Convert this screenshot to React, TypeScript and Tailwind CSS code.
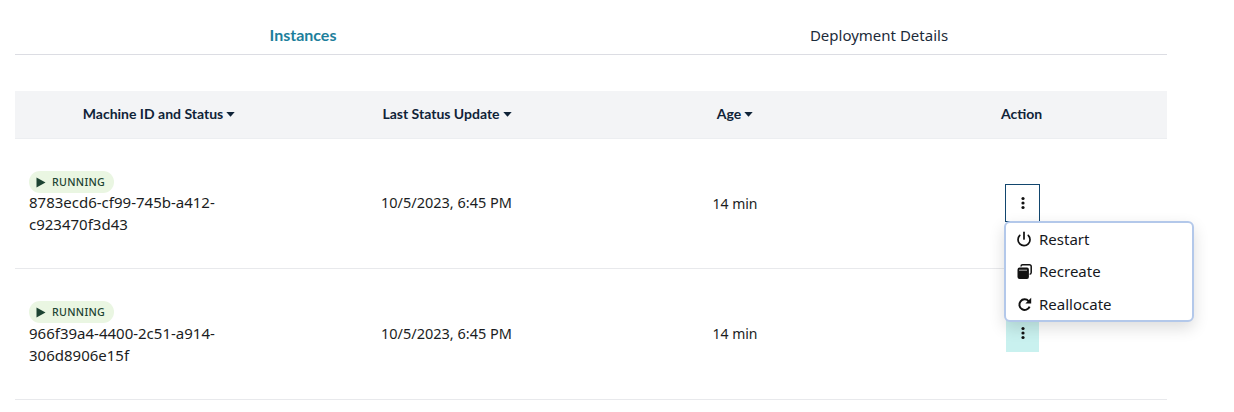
import { Power } from 'lucide-react'

const rows = [
  { id: '8783ecd6-cf99-745b-a412-c923470f3d43', updated: '10/5/2023, 6:45 PM', age: '14 min', open: true },
  { id: '966f39a4-4400-2c51-a914-306d8906e15f', updated: '10/5/2023, 6:45 PM', age: '14 min', open: false },
]

function Caret() {
  return (
    <svg width="9" height="5" viewBox="0 0 9 5" className="ml-[3px] inline-block">
      <path d="M0.3 0h8.4L4.5 4.8z" fill="#0f2338" />
    </svg>
  )
}

function Dots() {
  return (
    <svg width="4" height="14" viewBox="0 0 4 14" fill="#111">
      <circle cx="2" cy="2.5" r="1.6" />
      <circle cx="2" cy="7" r="1.6" />
      <circle cx="2" cy="11.5" r="1.6" />
    </svg>
  )
}

function RecreateIcon() {
  return (
    <svg width="15" height="15" viewBox="0 0 15 15">
      <path d="M4 2.6V2.4A1.6 1.6 0 0 1 5.6 0.8h6.9A1.7 1.7 0 0 1 14.2 2.5v6.1A1.6 1.6 0 0 1 12.6 10.2" fill="none" stroke="#111" strokeWidth="1.5" />
      <path d="M2.6 3.6h7.4a1.9 1.9 0 0 1 1.9 1.9v7.6a1.9 1.9 0 0 1-1.9 1.9H2.6a2.1 2.1 0 0 1-2.1-2.1V5.7a2.1 2.1 0 0 1 2.1-2.1z" fill="#111" />
      <path d="M2 6.2h8" stroke="#fff" strokeWidth="0.7" />
    </svg>
  )
}

function ReallocateIcon() {
  return (
    <svg width="15" height="15" viewBox="0 0 15 15">
      <path d="M11.6 4.1A5.3 5.3 0 1 0 12.6 9.6" fill="none" stroke="#111" strokeWidth="2" />
      <path d="M14.2 0.8V6.6H8.4z" fill="#111" />
    </svg>
  )
}

function Menu() {
  const items = [
    { label: 'Restart', icon: <Power size={16} strokeWidth={2.6} color="#111" /> },
    { label: 'Recreate', icon: <RecreateIcon /> },
    { label: 'Reallocate', icon: <ReallocateIcon /> },
  ]
  return (
    <div className="absolute left-[-1px] top-[37px] z-10 w-[190px] h-[101px] rounded-[6px] border-2 border-[#b3c8ea] bg-white shadow-[0_6px_16px_rgba(0,0,0,0.14)]">
      <div className="flex h-[32px] items-center pl-[10px] gap-[7px] text-[15px] text-[#16181d]">
        <span className="flex w-[16px] justify-center">{items[0].icon}</span>
        {items[0].label}
      </div>
      <div className="flex h-[33px] items-center pl-[10px] gap-[7px] text-[15px] text-[#16181d]">
        <span className="flex w-[16px] justify-center">{items[1].icon}</span>
        {items[1].label}
      </div>
      <div className="flex h-[32px] items-center pl-[10px] gap-[7px] text-[15px] text-[#16181d]">
        <span className="flex w-[16px] justify-center">{items[2].icon}</span>
        {items[2].label}
      </div>
    </div>
  )
}

export default function App() {
  return (
    <div className="w-[1234px] h-[412px] bg-white pl-[15px] overflow-hidden font-['Noto_Sans',sans-serif] text-[#1b1d22]">
      <div className="w-[1152px]">
        <div className="grid grid-cols-2 h-[55px] border-b border-[#dcdde3] pt-[25px] text-[15px] text-center leading-[20px]">
          <div className="font-['Lato',sans-serif] font-bold text-[16px] text-[#1d7f9c]">Instances</div>
          <div className="text-[#1c2b3a]">Deployment Details</div>
        </div>
        <div className="mt-[36px] grid grid-cols-4 h-[48px] pb-[3px] items-center bg-[#f3f4f6] border-b border-[#eceef1] text-center font-['Lato',sans-serif] text-[14px] font-bold text-[#0f2338]">
          <div>Machine ID and Status<Caret /></div>
          <div>Last Status Update<Caret /></div>
          <div>Age<Caret /></div>
          <div className="pr-[3px]">Action</div>
        </div>
        {rows.map((row) => (
          <div key={row.id} className={row.open
            ? 'grid grid-cols-4 h-[130px] pb-[1px] items-center border-b border-[#e8e9ec] text-[14.5px]'
            : 'grid grid-cols-4 h-[131px] pb-[2px] items-center border-b border-[#e8e9ec] text-[14.5px]'}>
            <div className={row.open ? 'pl-[14px] pr-[70px]' : 'pl-[14px] pr-[70px] pt-[1px]'}>
              <div className={row.open
                ? 'flex w-fit h-[22px] -mb-[2px] items-center rounded-full bg-[#eaf6e2] pl-[7px] pr-[9px] gap-[6px] text-[10.7px] font-medium tracking-[0.3px] text-[#1d4432]'
                : 'flex w-fit h-[22px] -mb-[1px] items-center rounded-full bg-[#eaf6e2] pl-[7px] pr-[9px] gap-[6px] text-[10.7px] font-medium tracking-[0.3px] text-[#1d4432]'}>
                <svg width="10" height="11" viewBox="0 0 10 11"><path d="M0.5 0.5 9.5 5.5 0.5 10.5z" fill="#1d4432" /></svg>
                RUNNING
              </div>
              <div className="text-[15px] leading-[22px] break-words">{row.id}</div>
            </div>
            <div className={row.open ? 'pr-[1px] text-center' : 'pr-[1px] pt-[2px] text-center'}>{row.updated}</div>
            <div className="text-center text-[14px]">{row.age}</div>
            <div className="relative ml-[126px] w-[35px]">
              <button className={row.open
                ? 'flex h-[38px] w-[35px] items-center justify-center border border-[#12466e] bg-white'
                : 'ml-[1px] flex h-[38px] w-[33px] items-center justify-center bg-[#c9f1ef]'}>
                <Dots />
              </button>
              {row.open && <Menu />}
            </div>
          </div>
        ))}
      </div>
    </div>
  )
}
